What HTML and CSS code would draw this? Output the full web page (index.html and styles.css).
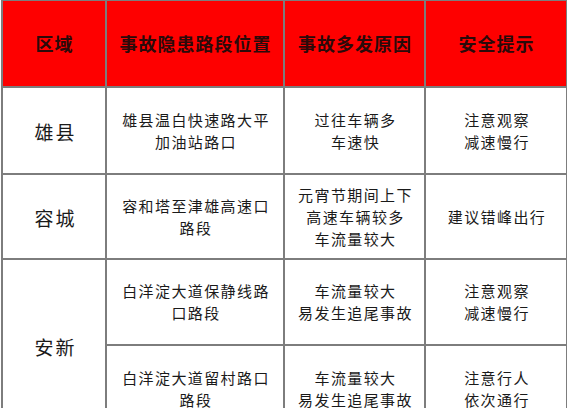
FILE: index.html
```html
<!DOCTYPE html>
<html lang="zh">
<head>
<meta charset="utf-8">
<link rel="stylesheet" href="styles.css">
</head>
<body>
<table class="tbl">
  <colgroup>
    <col class="c1"><col class="c2"><col class="c3"><col class="c4">
  </colgroup>
  <thead>
    <tr class="head">
      <th>区域</th>
      <th>事故隐患路段位置</th>
      <th>事故多发原因</th>
      <th>安全提示</th>
    </tr>
  </thead>
  <tbody>
    <tr class="r1">
      <td class="area">雄县</td>
      <td>雄县温白快速路大平<br>加油站路口</td>
      <td>过往车辆多<br>车速快</td>
      <td>注意观察<br>减速慢行</td>
    </tr>
    <tr class="r2">
      <td class="area">容城</td>
      <td>容和塔至津雄高速口<br>路段</td>
      <td>元宵节期间上下<br>高速车辆较多<br>车流量较大</td>
      <td>建议错峰出行</td>
    </tr>
    <tr class="r3">
      <td class="area" rowspan="2">安新</td>
      <td>白洋淀大道保静线路<br>口路段</td>
      <td>车流量较大<br>易发生追尾事故</td>
      <td>注意观察<br>减速慢行</td>
    </tr>
    <tr class="r4">
      <td>白洋淀大道留村路口<br>路段</td>
      <td>车流量较大<br>易发生追尾事故</td>
      <td>注意行人<br>依次通行</td>
    </tr>
  </tbody>
</table>
</body>
</html>
```
FILE: styles.css
```css
html, body {
  margin: 0;
  padding: 0;
  background: #ffffff;
  overflow: hidden;
}
.tbl {
  border-collapse: collapse;
  table-layout: fixed;
  width: 566px;
  margin: -1px 0 0 1px;
  font-family: "Noto Sans CJK SC", "Noto Sans", sans-serif;
  color: #1a1a1a;
}
.c1 { width: 104px; }
.c2 { width: 178px; }
.c3 { width: 141px; }
.c4 { width: 142px; }
.tbl th, .tbl td {
  border: 2px solid #7d7d7d;
  text-align: center;
  vertical-align: middle;
  padding: 0 0 0 1px;
}
.tbl th {
  background: #fe0000;
  color: #2a0a0a;
  font-weight: 700;
  font-size: 18px;
  letter-spacing: 1px;
  line-height: 24px;
  padding-bottom: 2px;
}
.tbl td {
  font-size: 15px;
  letter-spacing: 1.4px;
  line-height: 22px;
  padding-left: 2px;
}
.tbl td.area {
  font-size: 19px;
  letter-spacing: 2px;
  padding-left: 3px;
  padding-top: 2px;
}
.head { height: 87px; }
.r1 { height: 87px; }
.r2 { height: 85px; }
.r3 { height: 86px; }
.r4 { height: 88px; }
```
